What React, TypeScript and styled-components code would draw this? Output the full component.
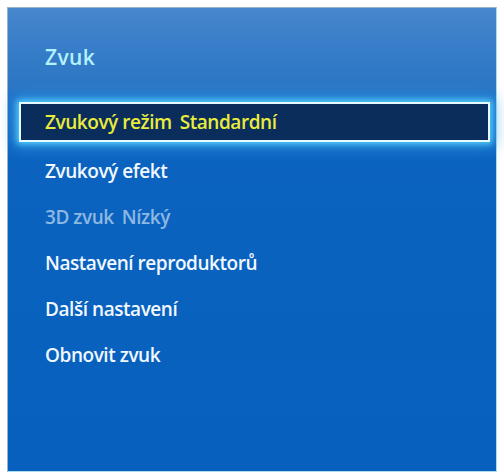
import styled, { createGlobalStyle } from "styled-components";

const GlobalStyle = createGlobalStyle`
    html, body {
        margin: 0;
        padding: 0;
        background: #ffffff;
    }
    body {
        font-family: "Open Sans", "DejaVu Sans", sans-serif;
    }
`;

type MenuItem = { label: string, value?: string, disabled?: boolean };

const items: MenuItem[] = [
    { label: 'Zvukový efekt' },
    { label: '3D zvuk', value: 'Nízký', disabled: true },
    { label: 'Nastavení reproduktorů' },
    { label: 'Další nastavení' },
    { label: 'Obnovit zvuk' },
];

const Page = styled.div`
    padding: 7px 0 0 7px;
`;

const Panel = styled.div`
    box-sizing: border-box;
    width: 490px;
    height: 465px;
    border: 1px solid #9bb3ca;
    border-right-color: #a9dcef;
    border-bottom-color: #a9dcef;
    background: linear-gradient(to bottom,
        #4787cd 0px,
        #3a7fc9 30px,
        #2c76c4 78px,
        #1f70c6 88px,
        #0b63bf 150px,
        #0760bd 100%);
    display: flex;
    flex-direction: column;
`;

const Header = styled.div`
    padding: 37px 0 0 37px;
    height: 57px;
`;

const Title = styled.div`
    font-size: 21px;
    font-weight: 600;
    line-height: 24px;
    color: #b4f1ff;
    letter-spacing: 0.4px;
`;

const List = styled.div`
    display: flex;
    flex-direction: column;
    padding: 0 6px 0 11px;
`;

const Selected = styled.div`
    box-sizing: border-box;
    height: 40px;
    border: 2px solid #e6fbff;
    background: #0b2d5c;
    box-shadow: 0 0 6px 2px rgba(90, 215, 255, 0.9), 0 0 16px 5px rgba(60, 170, 240, 0.6);
    padding: 0 0 0 24px;
    display: flex;
    align-items: center;
    gap: 8px;
    margin-bottom: 6px;
`;

const Row = styled.div<{ $disabled?: boolean }>`
    height: 46px;
    display: flex;
    align-items: center;
    gap: 8px;
    padding-left: 26px;
    color: ${p => p.$disabled ? '#8db8e3' : '#f2f8ff'};
`;

const Label = styled.span<{ $active?: boolean }>`
    font-size: 19px;
    font-weight: 600;
    letter-spacing: -0.45px;
    color: ${p => p.$active ? '#e9ec3c' : 'inherit'};
    white-space: nowrap;
`;

const App = () => {
    return (
        <>
            <GlobalStyle />
            <Page>
                <Panel>
                    <Header>
                        <Title>Zvuk</Title>
                    </Header>
                    <List>
                        <Selected>
                            <Label $active>Zvukový režim</Label>
                            <Label $active>Standardní</Label>
                        </Selected>
                        {items.map(item => (
                            <Row key={item.label} $disabled={item.disabled}>
                                <Label>{item.label}</Label>
                                {item.value && <Label>{item.value}</Label>}
                            </Row>
                        ))}
                    </List>
                </Panel>
            </Page>
        </>
    );
};

export default App;
